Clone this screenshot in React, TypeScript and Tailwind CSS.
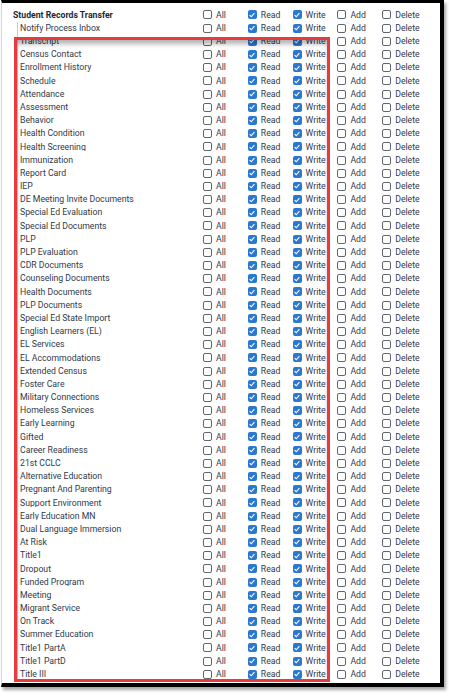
import React from "react";

const children = [
  "Notify Process Inbox",
  "Transcript",
  "Census Contact",
  "Enrollment History",
  "Schedule",
  "Attendance",
  "Assessment",
  "Behavior",
  "Health Condition",
  "Health Screening",
  "Immunization",
  "Report Card",
  "IEP",
  "DE Meeting Invite Documents",
  "Special Ed Evaluation",
  "Special Ed Documents",
  "PLP",
  "PLP Evaluation",
  "CDR Documents",
  "Counseling Documents",
  "Health Documents",
  "PLP Documents",
  "Special Ed State Import",
  "English Learners (EL)",
  "EL Services",
  "EL Accommodations",
  "Extended Census",
  "Foster Care",
  "Military Connections",
  "Homeless Services",
  "Early Learning",
  "Gifted",
  "Career Readiness",
  "21st CCLC",
  "Alternative Education",
  "Pregnant And Parenting",
  "Support Environment",
  "Early Education MN",
  "Dual Language Immersion",
  "At Risk",
  "Title1",
  "Dropout",
  "Funded Program",
  "Meeting",
  "Migrant Service",
  "On Track",
  "Summer Education",
  "Title1 PartA",
  "Title1 PartD",
  "Title III",
];

const rights = [
  { label: "All", checked: false },
  { label: "Read", checked: true },
  { label: "Write", checked: true },
  { label: "Add", checked: false },
  { label: "Delete", checked: false },
];

function Box({ checked }: { checked: boolean }) {
  if (checked) {
    return (
      <span className="flex h-[9px] w-[9px] shrink-0 items-center justify-center rounded-[2px] bg-[#2a78cf]">
        <svg viewBox="0 0 10 10" className="h-[8px] w-[8px]">
          <path d="M2 5.2 L4.1 7.2 L8 2.8" fill="none" stroke="white" strokeWidth="1.4" />
        </svg>
      </span>
    );
  }
  return <span className="h-[9px] w-[9px] shrink-0 rounded-[2px] border border-[#5f6670] bg-white" />;
}

function Row({ label, bold, child }: { label: string; bold?: boolean; child?: boolean }) {
  return (
    <div className="flex h-[13.2px] items-center">
      <div
        className={
          "w-[201px] truncate " +
          (child ? "pl-[18px] " : "pl-[11px] ") +
          (bold ? "font-bold text-[#1f2733]" : "text-[#2f3a4a]")
        }
      >
        {label}
      </div>
      {rights.map((r) => (
        <div key={r.label} className="flex w-[44.8px] items-center gap-[4px]">
          <Box checked={r.checked} />
          <span className="text-[#2f3a4a]">{r.label}</span>
        </div>
      ))}
    </div>
  );
}

export default function App() {
  return (
    <div className="h-[696px] w-[449px] bg-white font-['Roboto',sans-serif] text-[8.7px] leading-none">
      <div className="relative ml-[1px] h-[687px] w-[443px] border-t-[3px] border-r-[4px] border-b-[4px] border-l border-t-black border-r-black border-b-black border-l-gray-300 bg-white shadow-[2px_3px_3px_rgba(0,0,0,0.35)]">
        <div className="relative pt-[5.4px]">
          <Row label="Student Records Transfer" bold />
          <div className="relative">
            <div className="absolute left-[15px] top-0 bottom-0 w-px bg-[#c8ccd2]" />
            {children.map((c) => (
              <Row key={c} label={c} child />
            ))}
          </div>
        </div>
        <div className="absolute left-[12px] top-[34px] h-[645px] w-[316px] border-[3px] border-[#e8393f] shadow-[inset_0_5px_5px_-1px_rgba(0,0,0,0.3)]" />
      </div>
    </div>
  );
}
